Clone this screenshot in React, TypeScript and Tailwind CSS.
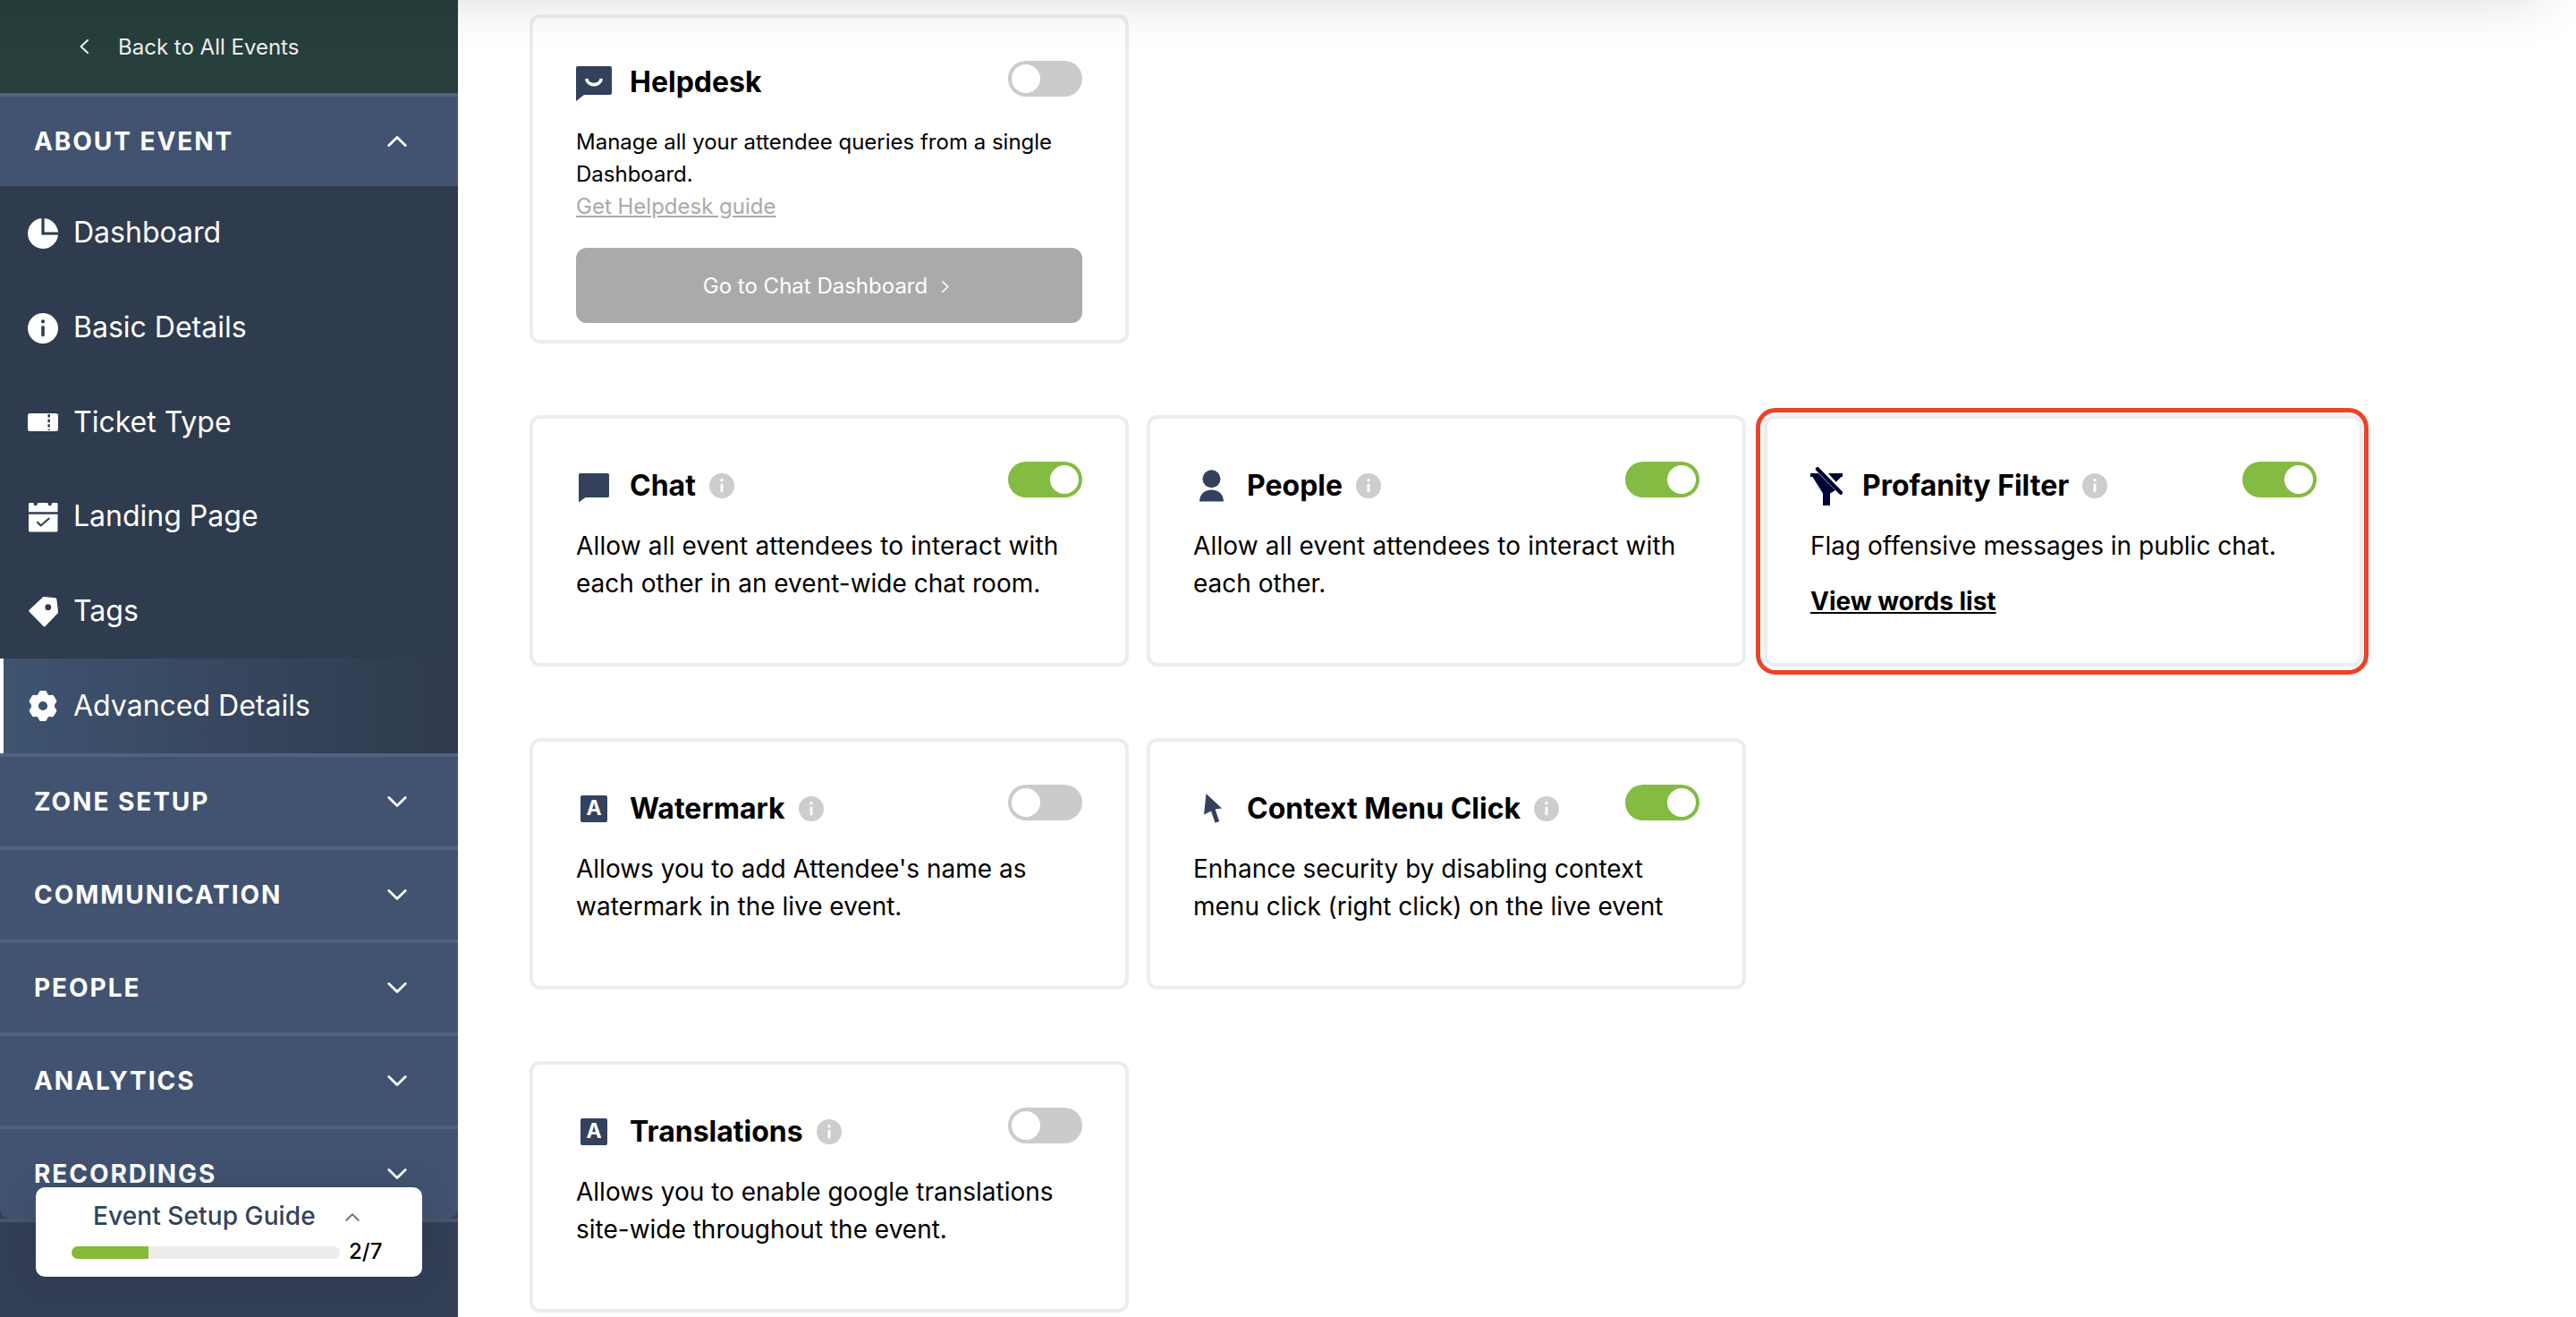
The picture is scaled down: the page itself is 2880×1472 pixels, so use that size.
import { useState } from "react";
import type { ReactNode } from "react";
import clsx from "clsx";

type IconProps = { className?: string };

function Chevron({ className }: IconProps) {
  return (
    <svg className={className} viewBox="0 0 22 12" fill="none" stroke="currentColor" strokeLinecap="round" strokeLinejoin="round">
      <path d="M1.8 1.5 11 10.4 20.2 1.5" strokeWidth="2.8" />
    </svg>
  );
}

function ChevronSide({ className }: IconProps) {
  return (
    <svg className={className} viewBox="0 0 10 16" fill="none" stroke="currentColor" strokeWidth="2" strokeLinecap="round" strokeLinejoin="round">
      <path d="M9 1 1.5 8 9 15" />
    </svg>
  );
}

function PieIcon() {
  return (
    <svg className="size-[34px]" viewBox="0 0 34 34" fill="currentColor">
      <path d="M15.4 0A17 17 0 1 0 34 18.6H15.4Z" />
      <path d="M18.6 0A17 17 0 0 1 34 15.4H18.6Z" />
    </svg>
  );
}

function InfoIcon({ className }: IconProps) {
  return (
    <svg className={className} viewBox="0 0 34 34" fill="currentColor" fillRule="evenodd">
      <path d="M17 0a17 17 0 1 0 0 34 17 17 0 0 0 0-34Zm0 7.2a2.1 2.1 0 1 1 0 4.2 2.1 2.1 0 0 1 0-4.2Zm-1.8 8.6a1.8 1.8 0 0 1 3.6 0v8.6a1.8 1.8 0 0 1-3.6 0Z" />
    </svg>
  );
}

function TicketIcon() {
  return (
    <svg className="size-[34px]" viewBox="0 0 34 34">
      <rect y="7" width="34" height="20" rx="2.5" fill="currentColor" />
      <path d="M23.7 8v18" stroke="#2f3b4e" strokeWidth="2.4" strokeDasharray="3.4 2.2" />
    </svg>
  );
}

function LandingIcon() {
  return (
    <svg className="size-[34px]" viewBox="0 0 34 34" fill="currentColor">
      <path d="M2 1h4.500c0 2 .8 3.200 2.200 3.200S11 3 11 1h11.500c0 2 .8 3.200 2.200 3.200S27 3 27 1h5.500q1 0 1 1v9.300H1V2q0-1 1-1Z" />
      <path d="M1 13.800h32.500V32q0 1.500-1.500 1.500H2.500Q1 33.500 1 32Z" />
      <path d="m11 22.700 3.600 3.800 9.200-8" fill="none" stroke="#2f3b4e" strokeWidth="2" strokeLinecap="round" strokeLinejoin="round" />
    </svg>
  );
}

function TagIcon() {
  return (
    <svg className="size-[34px]" viewBox="0 0 34 34" fill="currentColor" fillRule="evenodd">
      <path d="M16.800.6q.6-.6 1.500-.5l12.500 1.200q1.500.2 1.600 1.700l1.600 14q.1.900-.5 1.500L19.600 32.900q-1 1-2 0L1.700 16.800q-1-1 0-2ZM22.800 8.300a3.400 3.400 0 1 0 0 6.800 3.400 3.400 0 0 0 0-6.800Z" />
    </svg>
  );
}

function GearIcon() {
  return (
    <svg className="size-[34px]" viewBox="0 0 34 34" fill="currentColor" fillRule="evenodd">
      <path d="M14.500 0h5q1 0 1.500 1l1.500 3q.4.900 1.400 1l3.700-.2q1 0 1.500.9l3 5.100q.5 1 0 1.800l-2 3.200q-.5 1.200 0 2.400l2 3.200q.5.900 0 1.800l-3 5.100q-.5.900-1.500.9l-3.700-.2q-1 .1-1.400 1L21 33q-.5 1-1.500 1h-5q-1 0-1.500-1l-1.500-3q-.4-.9-1.400-1l-3.700.2q-1 0-1.500-.9l-3-5.100q-.5-.9 0-1.800l2-3.200q.5-1.200 0-2.400l-2-3.200q-.5-.8 0-1.800l3-5.100q.5-.9 1.500-.9l3.700.2q1-.1 1.400-1L13 1q.5-1 1.500-1ZM17 11.900a5.100 5.100 0 1 0 0 10.200 5.100 5.100 0 0 0 0-10.200Z" />
    </svg>
  );
}

function HelpdeskIcon() {
  return (
    <svg className="mt-[3px] h-[39px] w-10" viewBox="0 0 40 39">
      <path d="M2 0h36q2 0 2 2v28q0 2-2 2H9l-9 7V2Q0 0 2 0Z" fill="#33415c" />
      <path d="M11.600 14a8.600 8.400 0 0 0 16.800 0" fill="none" stroke="#fff" strokeWidth="3.600" />
    </svg>
  );
}

function ChatIcon() {
  return (
    <svg className="mt-1 h-8 w-[34px]" viewBox="0 0 34 32">
      <path d="M1.500 0h31Q34 0 34 1.500v24q0 1.500-1.500 1.500H7.500L0 32.500V1.500Q0 0 1.500 0Z" fill="#33415c" />
    </svg>
  );
}

function PersonIcon() {
  return (
    <svg className="h-9 w-[27px]" viewBox="0 0 27 36" fill="#33415c">
      <circle cx="13.500" cy="10.200" r="10" />
      <path d="M0 35.500C.3 27.500 5.500 22.500 13.500 22.500S26.700 27.500 27 35.500Z" />
    </svg>
  );
}

function FilterOffIcon() {
  return (
    <svg className="mt-0.5 mr-[2px] h-[43px] w-9" viewBox="0 0 36 43" fill="#000235">
      <path d="M0 7h9l19 19-6 3.500V43h-8V29.500L2.500 11H0Z" />
      <path d="M20 7h16v4h-1.500l-5.800 5.800Z" />
      <path d="M8 2.200 34 28.800" stroke="#000235" strokeWidth="4.400" strokeLinecap="round" />
    </svg>
  );
}

function LetterIcon() {
  return (
    <span className="flex size-[30px] items-center justify-center rounded-[2px] bg-[#33415c] text-[23px] leading-none font-bold text-white">
      A
    </span>
  );
}

function CursorIcon() {
  return (
    <svg className="ml-[3px] h-[33px] w-5" viewBox="0 0 20 33" fill="#33415c">
      <path d="M2.500 0 20 16.500l-7.400 1L17.200 31 12.600 32.800 8 19.500 0 23.500Z" />
    </svg>
  );
}

const menuItems = [
  { label: "Dashboard", icon: <PieIcon /> },
  { label: "Basic Details", icon: <InfoIcon className="size-[34px]" /> },
  { label: "Ticket Type", icon: <TicketIcon /> },
  { label: "Landing Page", icon: <LandingIcon /> },
  { label: "Tags", icon: <TagIcon /> },
  { label: "Advanced Details", icon: <GearIcon /> },
];

const sections = ["ZONE SETUP", "COMMUNICATION", "PEOPLE", "ANALYTICS", "RECORDINGS"];

function SectionHeader({ label, open, last }: { label: string; open?: boolean; last?: boolean }) {
  return (
    <div className="border-t-4 border-[#52627e] bg-[#33415a]">
      <button
        className={clsx(
          "flex h-[100px] w-full items-center justify-between bg-[#415371] pr-[57px] pl-[38px] text-white",
          last && "rounded-b-xl"
        )}
      >
        <span className="text-[28px] font-bold tracking-[1.95px]">{label}</span>
        <Chevron className={clsx("h-3 w-[22px]", open && "rotate-180")} />
      </button>
    </div>
  );
}

function SetupGuide({ done, total }: { done: number; total: number }) {
  return (
    <div className="absolute bottom-[45px] left-10 h-[100px] w-[432px] rounded-[10px] bg-white px-10 pt-3 shadow-[0_0_40px_rgba(0,0,0,0.12)]">
      <div className="flex h-10 items-center pl-6">
        <span className="text-[28px] font-medium tracking-[0.1px] text-[#33415c]">Event Setup Guide</span>
        <Chevron className="mt-0.5 ml-[33px] h-[9px] w-4 rotate-180 text-[#777777]" />
      </div>
      <div className="mt-[5px] flex h-8 items-center gap-[10px]">
        <div className="h-[14px] w-[300px] overflow-hidden rounded-full bg-[#eeeceb]">
          <div className="h-full bg-[#86b93a]" style={{ width: `${(done / total) * 100}%` }} />
        </div>
        <span className="pb-0.5 text-2xl font-medium text-black">
          {done}/{total}
        </span>
      </div>
    </div>
  );
}

function Sidebar() {
  const [active, setActive] = useState("Advanced Details");

  return (
    <aside className="relative flex w-[512px] shrink-0 flex-col bg-[#333f57]">
      <a className="flex h-[104px] shrink-0 items-center bg-[#263f3c] pl-[89px] text-2xl text-[#eeeeee]">
        <ChevronSide className="mr-[33px] h-4 w-[10px]" />
        <span className="pt-0.5">Back to All Events</span>
      </a>
      <SectionHeader label="ABOUT EVENT" open />
      <nav className="flex h-[634px] shrink-0 flex-col bg-[#2f3b4e]">
        {menuItems.map((item) => (
          <button
            key={item.label}
            onClick={() => setActive(item.label)}
            className={clsx(
              "flex flex-1 items-center gap-[17px] border-l-4 pl-[27px] text-[32px] text-white",
              active === item.label
                ? "border-white bg-linear-to-r from-[#3e5470] via-[#37465f] to-[#2f3b4c]"
                : "border-transparent"
            )}
          >
            {item.icon}
            <span className="pb-px">{item.label}</span>
          </button>
        ))}
      </nav>
      {sections.map((label) => (
        <SectionHeader key={label} label={label} last={label === "RECORDINGS"} />
      ))}
      <div className="h-1 shrink-0 bg-[#495669]" />
      <SetupGuide done={2} total={7} />
    </aside>
  );
}

function Toggle({ defaultOn }: { defaultOn: boolean }) {
  const [on, setOn] = useState(defaultOn);
  return (
    <button
      role="switch"
      aria-checked={on}
      onClick={() => setOn(!on)}
      className={clsx(
        "flex h-10 w-[83px] shrink-0 rounded-full p-1",
        on ? "justify-end bg-[#84bb42]" : "justify-start bg-[#cbcbcb]"
      )}
    >
      <span className="size-8 rounded-full bg-white" />
    </button>
  );
}

type Feature = {
  title: string;
  icon: ReactNode;
  on: boolean;
  text: string;
  textClass?: string;
  link?: string;
};

const featureRows: Feature[][] = [
  [
    {
      title: "Chat",
      icon: <ChatIcon />,
      on: true,
      text: "Allow all event attendees to interact with each other in an event-wide chat room.",
      textClass: "first-line:tracking-[0.15px]",
    },
    {
      title: "People",
      icon: <PersonIcon />,
      on: true,
      text: "Allow all event attendees to interact with each other.",
      textClass: "first-line:tracking-[0.15px]",
    },
    { title: "Profanity Filter", icon: <FilterOffIcon />, on: true, text: "Flag offensive messages in public chat.", link: "View words list" },
  ],
  [
    { title: "Watermark", icon: <LetterIcon />, on: false, text: "Allows you to add Attendee's name as watermark in the live event." },
    { title: "Context Menu Click", icon: <CursorIcon />, on: true, text: "Enhance security by disabling context menu click (right click) on the live event" },
  ],
  [
    { title: "Translations", icon: <LetterIcon />, on: false, text: "Allows you to enable google translations site-wide throughout the event." },
  ],
];

function FeatureCard({ feature }: { feature: Feature }) {
  return (
    <div className="relative h-[281px] w-[670px] rounded-xl border-4 border-[#eeecec] bg-white p-12">
      <div className="flex h-[53px] justify-between">
        <div className="flex items-center">
          <span className={clsx("flex justify-center", feature.link ? "w-[38px]" : "w-10")}>{feature.icon}</span>
          <h3 className="ml-5 text-[32px] leading-[53px] font-bold">{feature.title}</h3>
          <InfoIcon className="ml-[15px] size-7 text-[#cdcdcd]" />
        </div>
        <Toggle defaultOn={feature.on} />
      </div>
      <p className={clsx("mt-5 text-[28px] leading-[42px]", feature.textClass)}>{feature.text}</p>
      {feature.link && (
        <a className="mt-5 block text-[28px] leading-[42px] font-bold underline">{feature.link}</a>
      )}
      {/* Highlight ring */}
      {feature.link && (
        <div className="pointer-events-none absolute -top-3 -right-[10px] -bottom-[13px] -left-[13px] rounded-[22px] border-[5px] border-[#ee4127]" />
      )}
    </div>
  );
}

export default function App() {
  return (
    <div
      className="relative flex h-[1472px] w-[2880px] overflow-hidden bg-white text-black"
      style={{ fontFamily: 'Inter, "Liberation Sans", sans-serif' }}
    >
      <Sidebar />
      <main className="flex flex-1 flex-col gap-20 pt-4 pl-20">
        <div className="h-[368px] w-[670px] shrink-0 rounded-xl border-4 border-[#eeecec] p-12">
          <div className="flex h-12 justify-between">
            <div className="flex items-center">
              <HelpdeskIcon />
              <h3 className="ml-5 text-[32px] font-bold">Helpdesk</h3>
            </div>
            <Toggle defaultOn={false} />
          </div>
          <p className="mt-[25px] text-2xl leading-9">Manage all your attendee queries from a single Dashboard.</p>
          <a className="block text-2xl leading-9 text-[#aaaaaa] underline">Get Helpdesk guide</a>
          <button className="mt-7 flex h-[84px] w-full items-center justify-center rounded-xl bg-[#aaaaaa] pt-0.5 pr-[7px] text-2xl text-white">
            Go to Chat Dashboard
            <ChevronSide className="ml-4 h-[13px] w-2 rotate-180" />
          </button>
        </div>
        {featureRows.map((row, i) => (
          <div key={i} className="flex shrink-0 gap-5">
            {row.map((feature) => (
              <FeatureCard key={feature.title} feature={feature} />
            ))}
          </div>
        ))}
      </main>
      {/* Shadow cast by the top bar */}
      <div className="pointer-events-none absolute -top-20 -left-20 h-20 w-[2925px] shadow-[0_0_60px_rgba(0,0,0,0.14)]" />
    </div>
  );
}
